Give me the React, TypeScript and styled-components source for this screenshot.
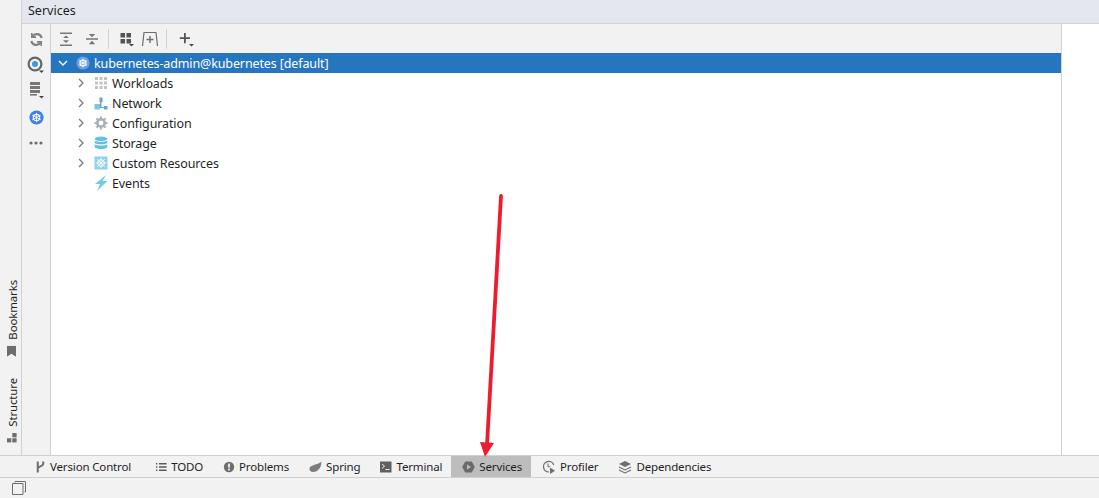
import styled, { createGlobalStyle } from 'styled-components';

const GlobalStyle = createGlobalStyle`
  html, body {
    margin: 0;
    padding: 0;
    height: 100%;
    background: #f2f2f2;
  }
  #root {
    height: 100%;
  }
`;

const Page = styled.div`
  position: relative;
  width: 1099px;
  height: 498px;
  display: flex;
  flex-direction: column;
  overflow: hidden;
  font-family: 'Noto Sans', 'Open Sans', sans-serif;
  font-size: 12.5px;
  letter-spacing: -0.12px;
  color: #1f1f1f;
`;

const Main = styled.div`
  flex: 1;
  display: flex;
  min-height: 0;
`;

const LeftStripe = styled.div`
  box-sizing: border-box;
  width: 22px;
  border-right: 1px solid #d1d1d1;
  display: flex;
  flex-direction: column;
  justify-content: flex-end;
  align-items: center;
  gap: 22px;
  padding-bottom: 12px;
  padding-left: 4px;
`;

const StripeItem = styled.div`
  writing-mode: vertical-rl;
  transform: rotate(180deg);
  display: flex;
  align-items: center;
  gap: 6px;
  font-size: 11.4px;
  letter-spacing: -0.1px;
  line-height: 14px;
`;

const StripeIcon = styled.svg`
  transform: rotate(180deg) translateX(-1px);
`;

const Content = styled.div`
  flex: 1;
  display: flex;
  flex-direction: column;
  min-width: 0;
`;

const TitleBar = styled.div`
  height: 23px;
  background: #e4e7ee;
  border-bottom: 1px solid #d1d1d1;
  padding-left: 6px;
  line-height: 21px;
  letter-spacing: 0;
  flex-shrink: 0;
`;

const Body = styled.div`
  flex: 1;
  display: flex;
  min-height: 0;
`;

const SideTools = styled.div`
  width: 28px;
  border-right: 1px solid #d1d1d1;
  display: flex;
  flex-direction: column;
  align-items: center;
  padding-top: 5px;
  gap: 6px;
`;

const SideTool = styled.div`
  width: 20px;
  height: 20px;
  display: flex;
  align-items: center;
  justify-content: center;
`;

const Center = styled.div`
  width: 1010px;
  border-right: 1px solid #d1d1d1;
  display: flex;
  flex-direction: column;
  background: #fff;
`;

const TopTools = styled.div`
  height: 29px;
  background: #f2f2f2;
  display: flex;
  align-items: center;
  padding-left: 3px;
  flex-shrink: 0;
`;

const TopTool = styled.div<{ $narrow?: boolean }>`
  width: ${(p) => (p.$narrow ? 20 : 24)}px;
  height: 22px;
  margin-right: 2px;
  display: flex;
  align-items: center;
  justify-content: center;
`;

const ToolDivider = styled.div`
  width: 1px;
  height: 20px;
  background: #d1d1d1;
  margin: 0 7px 0 2px;
`;

const Tree = styled.div`
  flex: 1;
  background: #fff;
`;

const Row = styled.div<{ $selected?: boolean; $depth: number }>`
  height: 20px;
  display: flex;
  align-items: center;
  gap: 4px;
  padding-left: ${(p) => (p.$depth === 0 ? 7 : 25)}px;
  background: ${(p) => (p.$selected ? '#2675bf' : 'transparent')};
  color: ${(p) => (p.$selected ? '#fff' : '#1f1f1f')};
  white-space: nowrap;
`;

const Arrow = styled.span`
  width: 10px;
  height: 12px;
  margin-right: 4px;
  display: flex;
  align-items: center;
  justify-content: center;
`;

const RightGap = styled.div`
  flex: 1;
  background: #fff;
`;

const ToolWindowBar = styled.div`
  height: 21px;
  flex-shrink: 0;
  border-top: 1px solid #d1d1d1;
  border-bottom: 1px solid #d1d1d1;
  display: flex;
  padding-left: 24px;
`;

const ToolTab = styled.div<{ $active?: boolean }>`
  display: flex;
  align-items: center;
  gap: 4px;
  padding: 0 9px 0 11px;
  font-size: 11.5px;
  letter-spacing: -0.15px;
  background: ${(p) => (p.$active ? '#bdbdbd' : 'transparent')};

  &:first-child {
    padding-right: 13px;
  }
`;

const StatusBar = styled.div`
  height: 20px;
  flex-shrink: 0;
  display: flex;
  align-items: center;
  padding-left: 12px;
`;

const Overlay = styled.svg`
  position: absolute;
  inset: 0;
  pointer-events: none;
`;

const Chevron = ({ down, color }: { down?: boolean; color: string }) => (
  <svg width="10" height="10" viewBox="0 0 10 10">
    <path
      d={down ? 'M1 3l4 4 4-4' : 'M3 1l4 4-4 4'}
      fill="none"
      stroke={color}
      strokeWidth="1.3"
    />
  </svg>
);

const Kube = ({ size, light }: { size: number; light?: boolean }) => (
  <svg width={size} height={size} viewBox="0 0 14 14">
    <circle cx="7" cy="7" r="6.6" fill={light ? '#6f9fe0' : '#3f7fe6'} />
    <circle cx="7" cy="7" r="3" fill="none" stroke="#fff" strokeWidth="1.1" />
    <path d="M7 2.6v8.8M3 4.8l8 4.4M11 4.8l-8 4.4" stroke="#fff" strokeWidth="0.8" />
  </svg>
);

const DropMark = () => <path d="M12 14h5l-2.5 2.5z" fill="#4a4a4a" />;

const Grey = '#6e6e6e';

const SideIcons = [
  <svg key="r" width="15" height="15" viewBox="0 0 16 16" fill="none" stroke="#808080" strokeWidth="2.3">
    <path d="M13.5 6.5A5.5 5.5 0 0 0 3.6 4.6M2.5 9.5a5.5 5.5 0 0 0 9.9 1.9" />
    <path d="M3 1v4.5h4.5M13 15v-4.5H8.5" strokeWidth="1.7" />
  </svg>,
  <svg key="t" width="20" height="20" viewBox="0 0 20 20">
    <circle cx="9" cy="9" r="6.4" fill="none" stroke="#666" strokeWidth="2.2" />
    <circle cx="9" cy="9" r="3" fill="#3d9be0" />
    <path d="M13 15.5h5l-2.5 2.5z" fill="#444" />
  </svg>,
  <svg key="l" width="20" height="20" viewBox="0 0 20 20" fill="#777">
    <rect x="4" y="1" width="10" height="3" />
    <rect x="4" y="5" width="10" height="3" />
    <rect x="4" y="9" width="10" height="3" />
    <rect x="4" y="13" width="7" height="1.6" />
    <path d="M13 15h5l-2.5 2.5z" fill="#444" />
  </svg>,
  <Kube key="k" size={15} />,
  <svg key="m" width="14" height="4" viewBox="0 0 14 4" fill={Grey}>
    <circle cx="2" cy="2" r="1.6" />
    <circle cx="7" cy="2" r="1.6" />
    <circle cx="12" cy="2" r="1.6" />
  </svg>,
];

const treeRows = [
  {
    label: 'Workloads',
    icon: (
      <svg width="14" height="14" viewBox="0 0 14 14" fill="#c2c2c2">
        {[1, 5.5, 10].flatMap((y) =>
          [1, 5.5, 10].map((x) => <rect key={`${x}-${y}`} x={x} y={y} width="3" height="3" />),
        )}
      </svg>
    ),
  },
  {
    label: 'Network',
    icon: (
      <svg width="14" height="14" viewBox="0 0 14 14" fill="#7fc4e4">
        <rect x="0.5" y="8" width="5.5" height="5.5" />
        <rect x="5.5" y="1.5" width="3" height="4.5" fill="#5fa8d0" />
        <rect x="10" y="10" width="3.5" height="3.5" fill="#5fa8d0" />
        <path d="M6 6h1.5v5H10v1H6z" fill="#5fa8d0" />
      </svg>
    ),
  },
  {
    label: 'Configuration',
    icon: (
      <svg width="14" height="14" viewBox="0 0 14 14">
        <circle cx="7" cy="7" r="3.7" fill="none" stroke="#a9b0b6" strokeWidth="2.6" />
        <path
          d="M7 .5v13M.5 7h13M2.4 2.4l9.2 9.2M11.6 2.4l-9.2 9.2"
          stroke="#a9b0b6"
          strokeWidth="2"
          strokeDasharray="2.4 8.2"
        />
      </svg>
    ),
  },
  {
    label: 'Storage',
    icon: (
      <svg width="14" height="14" viewBox="0 0 14 14" fill="#62c0e6">
        <ellipse cx="7" cy="2.8" rx="6.3" ry="2.3" />
        <path d="M.7 4.6C2 6.4 12 6.4 13.3 4.6v2.2C12 8.8 2 8.8.7 6.8z" />
        <path d="M.7 8.2c1.3 1.8 11.3 1.8 12.6 0v3C12 13.6 2 13.6.7 11.2z" />
      </svg>
    ),
  },
  {
    label: 'Custom Resources',
    icon: (
      <svg width="14" height="14" viewBox="0 0 14 14">
        <rect x="0.5" y="0.5" width="13" height="13" fill="#8fd0ea" />
        <circle cx="7" cy="7" r="3.4" fill="none" stroke="#fff" strokeWidth="1" />
        <path d="M7 1.5v11M1.5 7h11M3 3l8 8M11 3l-8 8" stroke="#fff" strokeWidth="0.7" />
      </svg>
    ),
  },
  {
    label: 'Events',
    leaf: true,
    icon: (
      <svg width="14" height="16" viewBox="0 0 14 16">
        <path d="M12 0L1 9h5L3 16 13.5 6H8.5z" fill="#6fcbe8" />
      </svg>
    ),
  },
];

const tabs = [
  {
    label: 'Version Control',
    icon: (
      <svg width="11" height="14" viewBox="0 0 12 14" fill="none" stroke={Grey} strokeWidth="2.2">
        <path d="M3 1v12M9 1v2.5C9 6.5 3 6 3 9" />
      </svg>
    ),
  },
  {
    label: 'TODO',
    icon: (
      <svg width="12" height="12" viewBox="0 0 12 12" fill="#5a5a5a">
        <path d="M1 2h1.4v1.4H1zM4 2h7.6v1.4H4zM1 5.3h1.4v1.4H1zM4 5.3h7.6v1.4H4zM1 8.6h1.4V10H1zM4 8.6h7.6V10H4z" />
      </svg>
    ),
  },
  {
    label: 'Problems',
    icon: (
      <svg width="12" height="12" viewBox="0 0 12 12">
        <circle cx="6" cy="6" r="5.2" fill={Grey} />
        <rect x="5.1" y="2.6" width="1.8" height="4" fill="#f2f2f2" />
        <rect x="5.1" y="7.6" width="1.8" height="1.8" fill="#f2f2f2" />
      </svg>
    ),
  },
  {
    label: 'Spring',
    icon: (
      <svg width="13" height="12" viewBox="0 0 13 12">
        <path d="M12.5 0.8C12.2 7.5 8.5 11 4.5 11 1.5 11 .2 9.3.5 7.5 1 4 6.5 4.6 12.5.8z" fill="#7d7d7d" />
      </svg>
    ),
  },
  {
    label: 'Terminal',
    icon: (
      <svg width="12" height="12" viewBox="0 0 12 12">
        <rect width="11.5" height="11" y="0.5" fill="#5f5f5f" />
        <path d="M2 3l2.5 2.2L2 7.4" fill="none" stroke="#f2f2f2" strokeWidth="1" />
        <path d="M5.5 8.5h4" stroke="#f2f2f2" strokeWidth="1" />
      </svg>
    ),
  },
  {
    label: 'Services',
    active: true,
    icon: (
      <svg width="13" height="12" viewBox="0 0 13 12">
        <path d="M3.2.5h6.6l3 5.5-3 5.5H3.2L.2 6z" fill="#6a6a6a" />
        <path d="M5 3.4l4 2.6-4 2.6z" fill="#bdbdbd" />
      </svg>
    ),
  },
  {
    label: 'Profiler',
    icon: (
      <svg width="14" height="14" viewBox="0 0 14 14">
        <path d="M7 12A5.3 5.3 0 1 1 11.8 5" fill="none" stroke={Grey} strokeWidth="1.2" />
        <path d="M6 3.5v3.2h2" fill="none" stroke={Grey} strokeWidth="1" />
        <path d="M8 7.5l5 3.2-5 3.2z" fill={Grey} />
      </svg>
    ),
  },
  {
    label: 'Dependencies',
    icon: (
      <svg width="14" height="14" viewBox="0 0 14 14">
        <path d="M7 1l6 3-6 3-6-3z" fill={Grey} />
        <path d="M1 7l6 3 6-3M1 10l6 3 6-3" fill="none" stroke={Grey} strokeWidth="1.1" />
      </svg>
    ),
  },
];

export default function App() {
  return (
    <Page>
      <GlobalStyle />
      <Main>
        <LeftStripe>
          <StripeItem>
            <StripeIcon width="9" height="11" viewBox="0 0 9 11">
              <path d="M0 0h9v11L4.5 8 0 11z" fill={Grey} />
            </StripeIcon>
            Bookmarks
          </StripeItem>
          <StripeItem>
            <StripeIcon width="10" height="10" viewBox="0 0 10 10" fill={Grey}>
              <rect x="0" y="5.5" width="4.3" height="4.3" />
              <rect x="5.3" y="5.5" width="4.3" height="4.3" />
              <rect x="5.3" y="0.3" width="4.3" height="4.3" />
            </StripeIcon>
            Structure
          </StripeItem>
        </LeftStripe>
        <Content>
          <TitleBar>Services</TitleBar>
          <Body>
            <SideTools>
              {SideIcons.map((icon, i) => (
                <SideTool key={i}>{icon}</SideTool>
              ))}
            </SideTools>
            <Center>
              <TopTools>
                <TopTool>
                  <svg width="14" height="16" viewBox="0 0 14 16" fill="#777">
                    <path d="M1 1.5h12v1.6H1zM1 13.5h12v1.6H1zM7 4.4l3 2.6H4zM7 12l-3-2.7h6z" />
                  </svg>
                </TopTool>
                <TopTool>
                  <svg width="14" height="16" viewBox="0 0 14 16" fill="#777">
                    <path d="M1 7.2h12v1.6H1zM7 6.2L3.8 3h6.4zM7 9.8l3.2 3.4H3.8z" />
                  </svg>
                </TopTool>
                <ToolDivider />
                <TopTool $narrow>
                  <svg width="18" height="18" viewBox="0 0 18 18" fill="#555">
                    <rect x="3.5" y="3" width="4.5" height="4.5" />
                    <rect x="9.5" y="3" width="4.5" height="4.5" />
                    <rect x="3.5" y="9" width="4.5" height="4.5" />
                    <rect x="9.5" y="9" width="4.5" height="4.5" />
                    <DropMark />
                  </svg>
                </TopTool>
                <TopTool>
                  <svg width="18" height="16" viewBox="0 0 18 16" fill="none" stroke={Grey} strokeWidth="1.2">
                    <path d="M1.5 15L3 1.5h12L16.5 15" />
                    <path d="M9 5v7M5.5 8.5h7" strokeWidth="1.4" />
                  </svg>
                </TopTool>
                <ToolDivider />
                <TopTool>
                  <svg width="18" height="18" viewBox="0 0 18 18" fill="#555">
                    <path d="M7 3h1.8v4.2H13V9H8.8v4.2H7V9H2.8V7.2H7z" />
                    <path d="M12 14h5l-2.5 2.5z" fill="#4a4a4a" />
                  </svg>
                </TopTool>
              </TopTools>
              <Tree>
                <Row $depth={0} $selected>
                  <Arrow>
                    <Chevron down color="#fff" />
                  </Arrow>
                  <Kube size={14} light />
                  <span>kubernetes-admin@kubernetes [default]</span>
                </Row>
                {treeRows.map((row) => (
                  <Row $depth={1} key={row.label}>
                    <Arrow>{!row.leaf && <Chevron color="#7a7a7a" />}</Arrow>
                    {row.icon}
                    <span>{row.label}</span>
                  </Row>
                ))}
              </Tree>
            </Center>
            <RightGap />
          </Body>
        </Content>
      </Main>
      <ToolWindowBar>
        {tabs.map((tab) => (
          <ToolTab key={tab.label} $active={tab.active}>
            {tab.icon}
            <span>{tab.label}</span>
          </ToolTab>
        ))}
      </ToolWindowBar>
      <StatusBar>
        <svg width="14" height="14" viewBox="0 0 14 14" fill="none" stroke="#6e6e6e" strokeWidth="1">
          <path d="M3 1.5V.5h10.5v10.5h-1M.5 2.5h10.5v11H.5z" />
        </svg>
      </StatusBar>
      <Overlay width="1099" height="498" viewBox="0 0 1099 498">
        <path d="M501 196L487 445" stroke="#ee1c2e" strokeWidth="3.8" strokeLinecap="round" />
        <path d="M480 442L494 443L485 457z" fill="#ee1c2e" />
      </Overlay>
    </Page>
  );
}
